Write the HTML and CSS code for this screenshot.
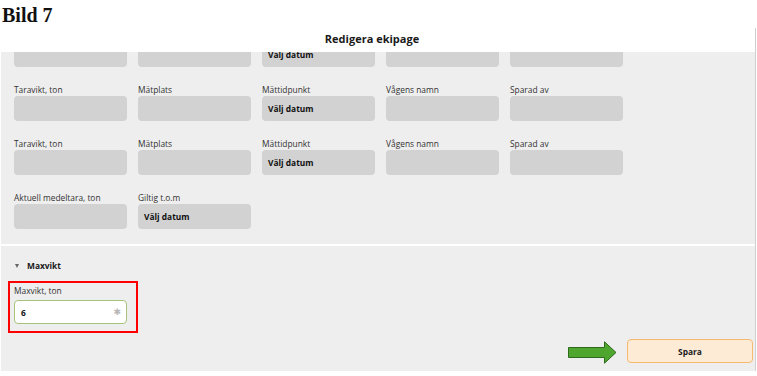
FILE: index.html
```html
<!DOCTYPE html>
<html>
  <head>
    <meta charset="UTF-8" />
    <link rel="stylesheet" href="styles.css">
  </head>
  <body>
    <h1 class="doc_title">Bild 7</h1>
    <div id="dialog">
      <div class="dialog_head">Redigera ekipage</div>
      <div class="scroll_area">
        <div class="field_grid">
          <!-- first row is scrolled up, only the bottom of the inputs shows -->
          <div class="field"><div class="input"></div></div>
          <div class="field"><div class="input"></div></div>
          <div class="field"><div class="input date">Välj datum</div></div>
          <div class="field"><div class="input"></div></div>
          <div class="field"><div class="input"></div></div>

          <div class="field"><label>Taravikt, ton</label><div class="input"></div></div>
          <div class="field"><label>Mätplats</label><div class="input"></div></div>
          <div class="field"><label>Mättidpunkt</label><div class="input date">Välj datum</div></div>
          <div class="field"><label>Vågens namn</label><div class="input"></div></div>
          <div class="field"><label>Sparad av</label><div class="input"></div></div>

          <div class="field"><label>Taravikt, ton</label><div class="input"></div></div>
          <div class="field"><label>Mätplats</label><div class="input"></div></div>
          <div class="field"><label>Mättidpunkt</label><div class="input date">Välj datum</div></div>
          <div class="field"><label>Vågens namn</label><div class="input"></div></div>
          <div class="field"><label>Sparad av</label><div class="input"></div></div>

          <div class="field"><label>Aktuell medeltara, ton</label><div class="input"></div></div>
          <div class="field"><label>Giltig t.o.m</label><div class="input date">Välj datum</div></div>
        </div>
      </div>
      <div class="section">
        <div class="section_head"><span class="caret"></span>Maxvikt</div>
        <div class="highlight">
          <div class="field">
            <label>Maxvikt, ton</label>
            <div class="input edit"><span>6</span><span class="required">✱</span></div>
          </div>
        </div>
        <div class="footer">
          <svg class="arrow" width="49" height="23" viewBox="0 0 49 23">
            <path d="M0.5 6.5 H36.5 V0.8 L48 11.5 L36.5 22.2 V16.5 H0.5 Z" fill="#4fa62f" stroke="#2d6a1c" stroke-width="1" />
          </svg>
          <button class="save_button">Spara</button>
        </div>
      </div>
    </div>
  </body>
</html>
```

FILE: styles.css
```css
body {
    margin: 0;
    background: white;
    font-family: "Open Sans", "Liberation Sans", sans-serif;
}
.doc_title {
    margin: 0;
    padding: 2px 0 0 2px;
    height: 26px;
    line-height: 26px;
    font-family: "Liberation Serif", serif;
    font-size: 20px;
    font-weight: bold;
    color: #111;
}
#dialog {
    width: 754px;
    margin-left: 1px;
    border-right: 1px solid #cfcfcf;
}
.dialog_head {
    height: 24px;
    line-height: 22px;
    padding-right: 12px;
    text-align: center;
    font-size: 11px;
    font-weight: bold;
    color: #1a1a1a;
    background: white;
}
.scroll_area {
    overflow: hidden;
    background: #eeeeee;
    padding-bottom: 15px;
}
.field_grid {
    display: grid;
    grid-template-columns: repeat(5, 113px);
    column-gap: 11px;
    row-gap: 18px;
    margin-top: -10px;
    padding-left: 13px;
}
.field label {
    display: block;
    height: 11px;
    line-height: 10px;
    font-size: 8.4px;
    color: #333;
}
.input {
    box-sizing: border-box;
    height: 25px;
    border-radius: 4px;
    background: #d2d2d2;
    display: flex;
    align-items: center;
    padding-left: 6px;
    font-size: 8.4px;
    font-weight: bold;
    color: #111;
}
.section {
    margin-top: 2px;
    background: #eeeeee;
    padding: 14px 1px 7px 7px;
    display: flex;
    flex-direction: column;
    align-items: flex-start;
}
.section_head {
    height: 12px;
    line-height: 12px;
    font-size: 8.4px;
    font-weight: bold;
    color: #1a1a1a;
    padding-left: 7px;
    display: flex;
    align-items: center;
    margin-bottom: 9px;
}
.caret {
    width: 0;
    height: 0;
    border-left: 2.5px solid transparent;
    border-right: 2.5px solid transparent;
    border-top: 4px solid #666;
    margin-right: 8px;
}
.highlight {
    border: 2px solid #f00;
    padding: 3px 9px 7px 4px;
}
.highlight .field { width: 113px; }
.highlight label { margin-bottom: 3px; }
.input.edit {
    height: 24px;
    background: white;
    border: 1px solid #a8c47a;
    justify-content: space-between;
    padding-right: 5px;
}
.required {
    font-family: "DejaVu Sans", sans-serif;
    font-weight: normal;
    font-size: 9px;
    color: #b8b8b8;
}
.footer {
    align-self: stretch;
    margin-top: 5px;
    display: flex;
    justify-content: flex-end;
    align-items: center;
    gap: 10px;
}
.arrow { display: block; margin-top: 3px; }
.save_button {
    box-sizing: border-box;
    width: 126px;
    height: 24px;
    margin-right: 1px;
    border: 1px solid #f5b970;
    border-radius: 4px;
    background: #fdebd6;
    font-family: "Open Sans", "Liberation Sans", sans-serif;
    font-size: 8.4px;
    font-weight: bold;
    color: #1a1a1a;
    padding: 0;
}
```
